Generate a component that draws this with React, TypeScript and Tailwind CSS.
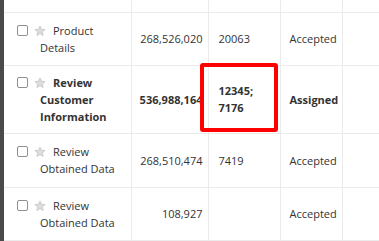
import React from "react";

const Star = () => (
  <svg width="12" height="12" viewBox="0 0 24 24" className="inline-block align-[-2px]">
    <path
      d="M12 1.8l3 6.7 7.2.7-5.4 4.8 1.6 7.1L12 17.4l-6.4 3.7 1.6-7.1-5.4-4.8 7.2-.7z"
      fill="#dcdcdc"
      stroke="#c2c2c2"
      strokeWidth="1.4"
      strokeLinejoin="round"
    />
  </svg>
);

const Box = () => (
  <span className="inline-block w-[11px] h-[11px] border border-[#8f8f8f] rounded-[2px] bg-white align-[-1px] mr-[6px]" />
);

type Row = {
  name: string;
  num: string;
  ids: React.ReactNode;
  status: string;
  bold?: boolean;
  h: string;
};

const rows: Row[] = [
  { name: "Product Details", num: "268,526,020", ids: "20063", status: "Accepted", h: "h-[53px]" },
  {
    name: "Review Customer Information",
    num: "536,988,164",
    ids: (
      <>
        12345;
        <br />
        7176
      </>
    ),
    status: "Assigned",
    bold: true,
    h: "h-[68px]",
  },
  { name: "Review Obtained Data", num: "268,510,474", ids: "7419", status: "Accepted", h: "h-[54px]" },
  { name: "Review Obtained Data", num: "108,927", ids: "", status: "Accepted", h: "h-[53px]" },
];

export default function App() {
  return (
    <div
      className="relative w-[379px] h-[241px] overflow-hidden bg-white flex text-[11px] leading-[17px] text-[#333]"
      style={{ fontFamily: '"Open Sans", "Noto Sans", sans-serif' }}
    >
      <div className="w-[4px] shrink-0 bg-[#4a4a4a]" />
      <table className="border-collapse table-fixed w-[420px] shrink-0">
        <colgroup>
          <col className="w-[127px]" />
          <col className="w-[77px]" />
          <col className="w-[72px]" />
          <col className="w-[62px]" />
          <col className="w-[82px]" />
        </colgroup>
        <tbody>
          <tr className="h-[12px]">
            <td className="border-r border-b border-[#ebebeb]" />
            <td className="border-r border-b border-[#ebebeb]" />
            <td className="border-r border-b border-[#ebebeb]" />
            <td className="border-r border-b border-[#ebebeb]" />
            <td className="border-b border-[#ebebeb]" />
          </tr>
          {rows.map((r, i) => (
            <tr key={i} className={r.h + (r.bold ? " font-bold" : "")}>
              <td className="border-r border-b border-[#ebebeb] align-middle pl-[36px] pr-[4px] indent-[-23px]">
                <Box />
                <Star />
                <span className="ml-[7px]">{r.name}</span>
              </td>
              <td className="border-r border-b border-[#ebebeb] align-middle text-right pr-[5px] whitespace-nowrap">
                {r.num}
              </td>
              <td className="border-r border-b border-[#ebebeb] align-middle pl-[10px]">{r.ids}</td>
              <td className="border-r border-b border-[#ebebeb] align-middle pl-[9px]">{r.status}</td>
              <td className="border-b border-[#ebebeb]" />
            </tr>
          ))}
        </tbody>
      </table>
      <div className="absolute left-[200px] top-[63px] w-[78px] h-[69px] border-4 border-[#ff0000] rounded-[3px]" />
    </div>
  );
}
